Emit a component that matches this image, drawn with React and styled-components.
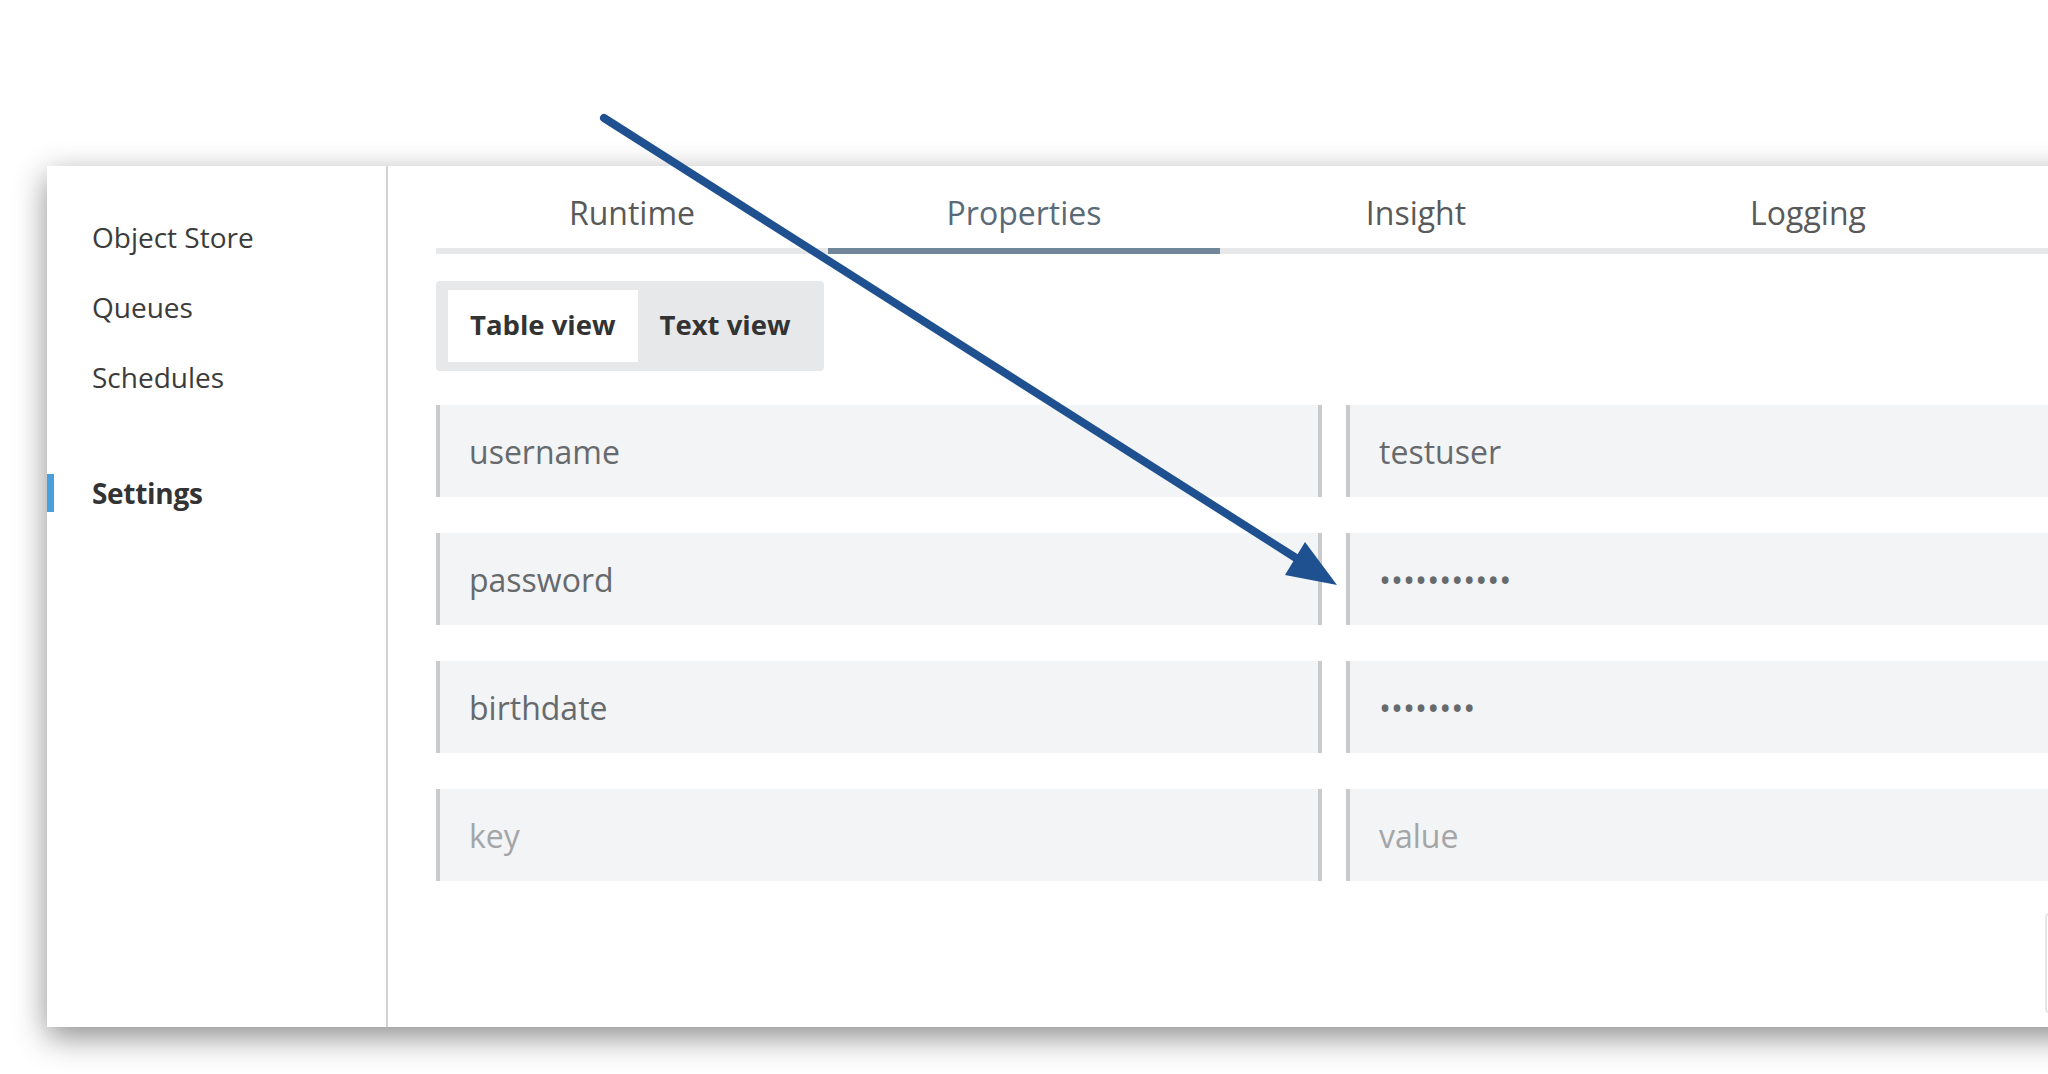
import React, { useState } from "react";
import styled, { createGlobalStyle } from "styled-components";

const GlobalStyle = createGlobalStyle`
  html, body {
    margin: 0;
    padding: 0;
    background: #fff;
    overflow: hidden;
  }
  body {
    font-family: "Open Sans", "Noto Sans", Arial, sans-serif;
  }
`;

const sideItems = ["Object Store", "Queues", "Schedules"];
const tabs = ["Runtime", "Properties", "Insight", "Logging"];

const rows = [
  { key: "username", value: "testuser" },
  { key: "password", value: "secretpass1", secret: true },
  { key: "birthdate", value: "19900101", secret: true },
];

const Page = () => {
  const [activeTab, setActiveTab] = useState("Properties");
  const [view, setView] = useState("table");

  return (
    <Screen>
      <GlobalStyle />
      <Card>
        <Sidebar>
          {sideItems.map((item) => (
            <SideItem key={item}>{item}</SideItem>
          ))}
          <SideItem active $spaced>
            Settings
          </SideItem>
        </Sidebar>

        <Content>
          <TabList>
            {tabs.map((tab) => (
              <Tab
                key={tab}
                $active={tab === activeTab}
                onClick={() => setActiveTab(tab)}
              >
                {tab}
              </Tab>
            ))}
          </TabList>

          <Segment>
            <SegButton $active={view === "table"} onClick={() => setView("table")}>
              Table view
            </SegButton>
            <SegButton $active={view === "text"} onClick={() => setView("text")}>
              Text view
            </SegButton>
          </Segment>

          <PropGrid>
            {rows.map((row) => (
              <React.Fragment key={row.key}>
                <Cell type="text" defaultValue={row.key} />
                <Cell
                  type={row.secret ? "password" : "text"}
                  defaultValue={row.value}
                />
              </React.Fragment>
            ))}
            <Cell type="text" placeholder="key" />
            <Cell type="text" placeholder="value" />
          </PropGrid>

          <Footer>
            {/* only its left edge shows in the shot */}
            <SaveButton aria-label="Save" />
          </Footer>
        </Content>
      </Card>

      {/* annotation arrow drawn over the screenshot */}
      <Arrow width="2048" height="1074" viewBox="0 0 2048 1074">
        <line
          x1="604"
          y1="118"
          x2="1296"
          y2="558"
          stroke="#1f5190"
          strokeWidth="8"
          strokeLinecap="round"
        />
        <polygon points="1337,585 1305,542 1285,575" fill="#1f5190" />
      </Arrow>
    </Screen>
  );
};

const Screen = styled.div`
  position: relative;
  width: 2048px;
  height: 1074px;
  padding: 166px 0 0 47px;
  box-sizing: border-box;
  overflow: hidden;
`;

const Card = styled.div`
  display: flex;
  width: 2233px;
  background: #fff;
  box-shadow: 0 10px 30px rgba(0, 0, 0, 0.45);
`;

const Sidebar = styled.nav`
  width: 339px;
  flex-shrink: 0;
  border-right: 2px solid #d3d3d3;
  padding-top: 52px;
  display: flex;
  flex-direction: column;
  gap: 32px;
`;

const SideItem = styled.div`
  font-size: 28px;
  line-height: 38px;
  color: ${(p) => (p.active ? "#333" : "#3b3b3b")};
  font-weight: ${(p) => (p.active ? 700 : 400)};
  letter-spacing: ${(p) => (p.active ? "-0.3px" : "0")};
  padding-left: ${(p) => (p.active ? "38px" : "45px")};
  border-left: ${(p) => (p.active ? "7px solid #4aa0dc" : "none")};
  margin-top: ${(p) => (p.$spaced ? "46px" : "0")};
  cursor: pointer;
`;

const Content = styled.main`
  flex: 1;
  padding: 0 48px 14px;
  display: flex;
  flex-direction: column;
`;

const TabList = styled.div`
  display: flex;
  border-bottom: 6px solid #e7e8ea;
`;

const Tab = styled.div`
  width: 392px;
  text-align: center;
  font-size: 32px;
  line-height: 44px;
  padding: 25px 0 13px;
  margin-bottom: -6px;
  color: ${(p) => (p.$active ? "#5a6a77" : "#595959")};
  border-bottom: 6px solid ${(p) => (p.$active ? "#72869a" : "transparent")};
  cursor: pointer;
`;

const Segment = styled.div`
  align-self: flex-start;
  display: flex;
  margin-top: 27px;
  padding: 9px 11px 9px 12px;
  background: #e7e8ea;
  border-radius: 4px;
`;

const SegButton = styled.button`
  height: 72px;
  padding: 0 22px 4px;
  border: none;
  font-family: inherit;
  font-size: 27.5px;
  font-weight: 700;
  color: #333;
  background: ${(p) => (p.$active ? "#fff" : "transparent")};
  cursor: pointer;
`;

const PropGrid = styled.div`
  display: grid;
  grid-template-columns: 1fr 1fr;
  column-gap: 24px;
  row-gap: 36px;
  margin-top: 34px;
`;

const Cell = styled.input`
  box-sizing: border-box;
  width: 100%;
  height: 92px;
  min-width: 0;
  padding: 0 29px;
  border: none;
  border-left: 4px solid #c9cacc;
  border-right: 4px solid #c9cacc;
  background: #f3f4f6;
  font-family: "Open Sans", "Noto Sans", Arial, sans-serif;
  font-size: 32px;
  color: #676a6d;
  outline: none;

  &::placeholder {
    color: #a3a5a7;
  }
`;

const Footer = styled.div`
  display: flex;
  justify-content: flex-end;
  margin-top: 32px;
`;

const SaveButton = styled.button`
  width: 187px;
  height: 100px;
  border: 2px solid #e6e6e6;
  border-radius: 4px;
  background: #fff;
`;

const Arrow = styled.svg`
  position: absolute;
  top: 0;
  left: 0;
  pointer-events: none;
`;

export default Page;
